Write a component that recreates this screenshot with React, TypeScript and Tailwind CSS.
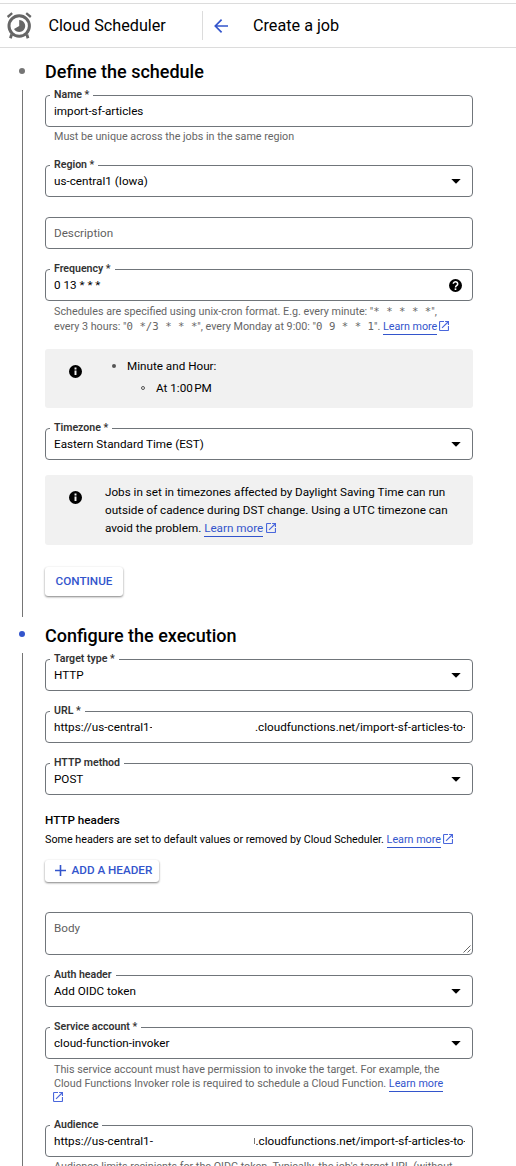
import type { ReactNode } from "react";

function CaretIcon() {
  return (
    <svg className="mr-[11px] h-[5px] w-[10px] shrink-0" viewBox="0 0 10 5">
      <path d="M0.3 0h9.4L5 4.8z" fill="#000" />
    </svg>
  );
}

function InfoIcon() {
  return (
    <svg className="h-[13px] w-[13px]" viewBox="2 2 20 20">
      <path
        d="M12 2a10 10 0 1 0 0 20 10 10 0 0 0 0-20zm1.5 15.5h-3V10.5h3v7zm0-8.5h-3V6h3v3z"
        fill="#000"
      />
    </svg>
  );
}

function HelpIcon() {
  return (
    <svg className="mr-[10px] h-[13px] w-[13px] shrink-0" viewBox="2 2 20 20">
      <circle cx="12" cy="12" r="10" fill="#000" />
      <path
        d="M8.6 9.4a3.4 3.1 0 1 1 5.6 2.4C12.800 12.8 12 13.300 12 15"
        fill="none"
        stroke="#fff"
        strokeWidth="2.3"
      />
      <path d="M10.700 16.400h2.600v2.500h-2.600z" fill="#fff" />
    </svg>
  );
}

function ExternalIcon({ className }: { className: string }) {
  return (
    <svg className={`inline-block h-[10px] w-[10px] ${className}`} viewBox="3 3 18 18">
      <path
        d="M19 19H5V5h7V3H5a2 2 0 0 0-2 2v14a2 2 0 0 0 2 2h14c1.1 0 2-.9 2-2v-7h-2v7zM14 3v2h3.59l-9.83 9.83 1.41 1.41L19 6.41V10h2V3h-7z"
        fill="#4a67dc"
      />
    </svg>
  );
}

function AlarmIcon() {
  return (
    <svg className="h-[27px] w-[26px]" viewBox="0 0 26 27" fill="none" stroke="#666">
      <circle cx="13.2" cy="14" r="10.200" strokeWidth="3" />
      <path d="M1.600 5 6.200 1.200M24.800 5 20.200 1.200" strokeWidth="2.300" />
      <path d="M5.600 22.500 4.400 26.200M20.800 22.500l1.200 3.700" strokeWidth="2.800" />
      <path d="M13.200 8a6 6 0 1 1-5.200 9L13.200 14z" fill="#666" stroke="none" />
    </svg>
  );
}

function LearnMore() {
  return <span className="border-b border-[#3355cc] pb-px text-[#3355cc]">Learn more</span>;
}

function Field({
  label,
  value,
  children,
}: {
  label?: string;
  value: ReactNode;
  children?: ReactNode;
}) {
  return (
    <div className="relative flex h-8 shrink-0 items-center justify-between rounded-[4px] border border-[#70757a] pl-2">
      {label && (
        <span className="absolute -top-[8px] left-[4px] bg-white px-[4px] text-[10.6px] leading-[14px] font-semibold tracking-[-0.02px] text-[#333]">
          {label}
        </span>
      )}
      {value}
      {children}
    </div>
  );
}

function SelectField({ label, value }: { label: string; value: string }) {
  return (
    <Field label={label} value={<span>{value}</span>}>
      <CaretIcon />
    </Field>
  );
}

function Step({
  title,
  active,
  children,
}: {
  title: string;
  active?: boolean;
  children: ReactNode;
}) {
  return (
    <section className="flex">
      <div className="flex w-[45px] shrink-0 flex-col items-center">
        <div className={active ? "flex h-9 w-full pt-[14px] pl-[19px]" : "flex h-[42px] w-full pt-[20px] pl-[19px]"}>
          <span className={active ? "size-[6px] rounded-full bg-[#3355cc]" : "size-[6px] rounded-full bg-[#757575]"} />
        </div>
        <div className="w-px flex-1 bg-[#757575]" />
      </div>
      <div className="flex w-[428px] flex-col">
        <h2
          className={
            active
              ? "flex h-[42px] items-center pb-[5px] text-[18px] font-medium"
              : "flex h-[47px] items-center text-[18px] font-medium"
          }
        >
          {title}
        </h2>
        {children}
      </div>
    </section>
  );
}

const code = "font-['DejaVu_Sans_Mono',monospace] text-[10.7px] leading-none whitespace-pre";

export default function App() {
  return (
    <div className="h-[1166px] w-[516px] overflow-hidden bg-white pt-[3px] font-[Roboto,sans-serif] text-[11.7px] leading-[18px] whitespace-nowrap text-black">
      <header className="flex h-[45px] items-center border-y border-[#dcdcdc] text-[16.2px]">
        <div className="flex w-[202px] items-center pl-[6px]">
          <AlarmIcon />
          <span className="ml-[16.4px]">Cloud Scheduler</span>
        </div>
        <div className="flex h-[29px] items-center border-l border-[#dcdcdc] pl-[11px]">
          <svg className="h-[14px] w-[14px]" viewBox="0 0 14 14" fill="none" stroke="#3355cc" strokeWidth="1.7">
            <path d="M14 7H1.4M7.6.7 1.3 7l6.3 6.3" />
          </svg>
          <span className="ml-[25px]">Create a job</span>
        </div>
      </header>

      <Step title="Define the schedule">
        <Field label="Name *" value="import-sf-articles" />
        <p className="h-[38px] pt-[2px] pl-[9px] text-[10.75px] leading-[15px] text-[#666]">
          Must be unique across the jobs in the same region
        </p>
        <SelectField label="Region *" value="us-central1 (Iowa)" />
        <div className="h-5" />
        <Field value={<span className="text-[#5f5f5f]">Description</span>} />
        <div className="h-5" />
        <Field label="Frequency *" value="0 13 * * *">
          <HelpIcon />
        </Field>
        <div className="h-12 pt-[3px] pl-[9px] text-[10.75px] leading-[15px] text-[#666]">
          <p className="h-[15px]">
            Schedules are specified using unix-cron format. E.g. every minute: "
            <code className={code}>* * * * *</code>",
          </p>
          <p className="h-[15px]">
            every 3 hours: "<code className={code}>0 */3 * * *</code>", every Monday at 9:00: "
            <code className={code}>0 9 * * 1</code>". <LearnMore />
            <ExternalIcon className="ml-[2px] align-[-1px]" />
          </p>
        </div>
        <div className="flex h-[59px] rounded-[3px] bg-[#f1f1f1] pt-[6px] pl-[23.5px]">
          <div className="w-[43.5px] pt-[10px]">
            <InfoIcon />
          </div>
          <ul>
            <li className="flex h-[22px] items-center">
              <span className="mr-[11px] size-[4px] rounded-full bg-[#555]" />
              Minute and Hour:
            </li>
            <li className="flex h-[22px] items-center pl-[29px]">
              <span className="mr-[11px] size-[4px] rounded-full border border-[#555]" />
              At 1:00&#8239;PM
            </li>
          </ul>
        </div>
        <div className="h-5" />
        <SelectField label="Timezone *" value="Eastern Standard Time (EST)" />
        <div className="mt-[15px] flex h-[70px] rounded-[3px] bg-[#f1f1f1] pt-[8px] pl-[23.5px]">
          <div className="w-[36.5px] pt-[8px]">
            <InfoIcon />
          </div>
          <p>
            Jobs in set in timezones affected by Daylight Saving Time can run
            <br />
            outside of cadence during DST change. Using a UTC timezone can
            <br />
            avoid the problem. <LearnMore />
            <ExternalIcon className="ml-[3px] align-[-1px]" />
          </p>
        </div>
        <div className="flex h-[72px] pt-[22px]">
          <button className="h-[29px] w-[78px] rounded-[3px] pb-[2px] font-medium text-[#3355cc] shadow-[0_1px_2px_rgba(0,0,0,0.4),0_1px_3px_rgba(0,0,0,0.12)]">
            CONTINUE
          </button>
        </div>
      </Step>

      <Step title="Configure the execution" active>
        <SelectField label="Target type *" value="HTTP" />
        <div className="h-5" />
        <Field
          label="URL *"
          value={
            <span className="flex w-[411px] justify-between overflow-hidden">
              <span className="w-[97.5px] overflow-hidden">https://us-central1-</span>
              <span className="w-[210px] overflow-hidden">.cloudfunctions.net/import-sf-articles-to-</span>
            </span>
          }
        />
        <div className="h-5" />
        <SelectField label="HTTP method" value="POST" />
        <h3 className="mt-[16px] h-[18px] font-medium">HTTP headers</h3>
        <p className="h-[18px] pt-[3px] text-[10.75px] leading-[16px]">
          Some headers are set to default values or removed by Cloud Scheduler. <LearnMore />
          <ExternalIcon className="ml-[2px] align-[-1px]" />
        </p>
        <div className="flex h-[65px] pt-[13px]">
          <button className="flex h-[22px] w-[114px] items-center rounded-[3px] pb-[2px] pl-[9.500px] font-medium text-[#3355cc] shadow-[0_1px_2px_rgba(0,0,0,0.4),0_1px_3px_rgba(0,0,0,0.12)]">
            <svg className="mr-[6px] h-[11px] w-[11px]" viewBox="0 0 11 11" stroke="#3355cc" strokeWidth="1.6">
              <path d="M5.500 0v11M0 5.500h11" />
            </svg>
            ADD A HEADER
          </button>
        </div>
        <div className="flex h-[43px] items-end justify-between rounded-[4px] border border-[#70757a] pl-2">
          <span className="self-start pt-[6px] text-[#5f5f5f]">Body</span>
          <svg className="mr-px mb-px h-[8px] w-[8px]" viewBox="0 0 8 8" stroke="#555" strokeWidth="0.9">
            <path d="M0.500 7.500l7-7M4.500 7.500l3-3" />
          </svg>
        </div>
        <div className="h-5" />
        <SelectField label="Auth header" value="Add OIDC token" />
        <div className="h-5" />
        <SelectField label="Service account *" value="cloud-function-invoker" />
        <div className="h-[66px] pt-[4px] pl-[9px] text-[10.75px] leading-[14px] text-[#666]">
          <p className="h-[14px]">
            This service account must have permission to invoke the target. For example, the
          </p>
          <p className="h-[14px]">
            Cloud Functions Invoker role is required to schedule a Cloud Function. <LearnMore />
          </p>
          <p className="-ml-[1px] h-[14px]">
            <ExternalIcon className="align-[-1px]" />
          </p>
        </div>
        <Field
          label="Audience"
          value={
            <span className="flex w-[411px] justify-between overflow-hidden">
              <span className="w-[100px] overflow-hidden">https://us-central1-</span>
              <span className="flex items-center">
                <span className="mr-px h-[6px] w-px bg-[#777]" />
                <span className="w-[209.500px] overflow-hidden">.cloudfunctions.net/import-sf-articles-to-</span>
              </span>
            </span>
          }
        />
        <p className="h-[14px] pt-[3px] pl-[9px] text-[10.75px] leading-[14px] text-[#666]">
          Audience limits recipients for the OIDC token. Typically, the job's target URL (without
        </p>
      </Step>
    </div>
  );
}
